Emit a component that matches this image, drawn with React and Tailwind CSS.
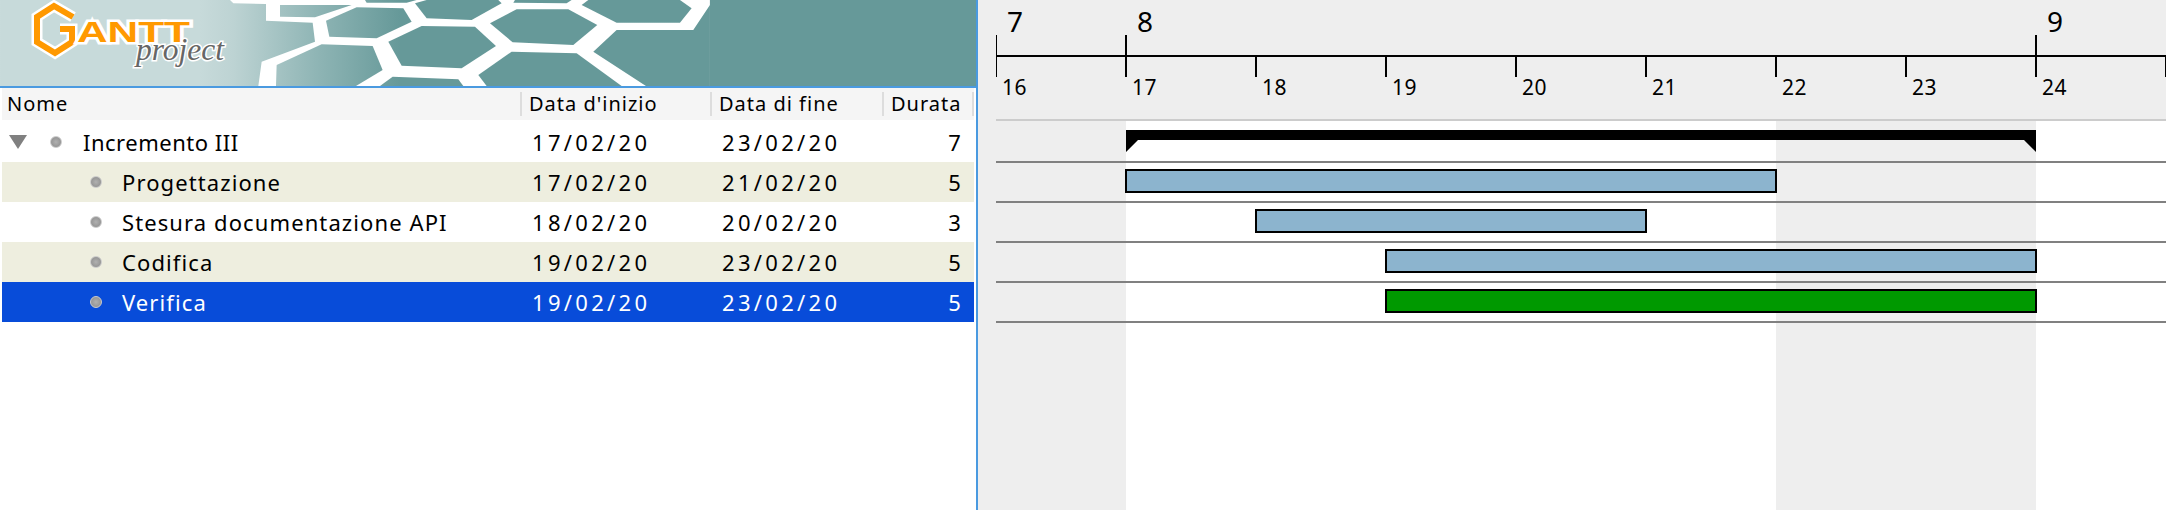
const rows = [
  { name: 'Incremento III', start: '17/02/20', end: '23/02/20', days: 7, summary: true },
  { name: 'Progettazione', start: '17/02/20', end: '21/02/20', days: 5, bar: 'col-start-2 col-span-5 bg-[#8cb4ce]' },
  { name: 'Stesura documentazione API', start: '18/02/20', end: '20/02/20', days: 3, bar: 'col-start-3 col-span-3 bg-[#8cb4ce]' },
  { name: 'Codifica', start: '19/02/20', end: '23/02/20', days: 5, bar: 'col-start-4 col-span-5 bg-[#8cb4ce]' },
  { name: 'Verifica', start: '19/02/20', end: '23/02/20', days: 5, bar: 'col-start-4 col-span-5 bg-[#009900]', selected: true },
]

const days = [16, 17, 18, 19, 20, 21, 22, 23, 24]

// coordinates taken from a 3x crop starting at x=200
const cells = [
  '240,15 455,15 345,52 240,50',
  '495,0 650,0 620,8 500,8',
  '645,10 680,0 895,0 905,10 815,60 680,55',
  '945,0 1115,0 1100,10 940,8',
  '1145,15 1165,0 1440,0 1475,25 1440,68 1250,68',
  '378,62 470,22 610,25 635,65 530,115 388,110',
  '870,70 950,28 1105,28 1192,75 1120,135 938,127',
  '565,125 665,78 825,80 888,138 785,205 605,197',
  '230,195 365,133 518,138 548,210 468,258 228,258',
  '540,258 578,230 775,238 790,258',
  '835,225 935,155 1130,160 1265,258 860,258',
  '1180,155 1250,90 1480,90 1530,15 1530,258 1338,258',
]

function Banner() {
  return (
    <svg width="976" height="86" viewBox="0 0 976 86" className="block" aria-label="GanttProject">
      <defs>
        <linearGradient id="banner" gradientUnits="userSpaceOnUse" x1="0" y1="0" x2="1000" y2="0">
          <stop offset="0" stopColor="#c7dada" />
          <stop offset="0.1" stopColor="#bdd3d3" />
          <stop offset="0.35" stopColor="#8fb5b5" />
          <stop offset="0.6" stopColor="#669999" />
          <stop offset="1" stopColor="#669999" />
        </linearGradient>
      </defs>
      <g transform="translate(200 0) scale(0.3333)">
        <rect x="-600" y="0" width="3000" height="258" fill="url(#banner)" />
        <polygon
          points="90,0 100,10 198,12 198,62 338,68 345,125 185,185 175,258 1530,258 1530,0"
          fill="#fff"
        />
        {cells.map((pts) => (
          <polygon key={pts} points={pts} fill="url(#banner)" />
        ))}
        <rect x="1530" y="0" width="900" height="258" fill="#669999" />
      </g>
      <polyline points="73,17 54,6 37,17 37,42 55,53 72,42 72,29 60,29" fill="none" stroke="#fff" strokeWidth="11" />
      <polyline points="73,17 54,6 37,17 37,42 55,53 72,42 72,29 60,29" fill="none" stroke="#ff9900" strokeWidth="6" />
      <text
        x="77"
        y="42"
        textLength="113"
        lengthAdjust="spacingAndGlyphs"
        fontSize="30"
        fontWeight="700"
        fill="#ff9900"
        stroke="#fff"
        strokeWidth="5"
        paintOrder="stroke"
        className="font-['Liberation_Sans',sans-serif]"
      >
        ANTT
      </text>
      <text
        x="136"
        y="60"
        textLength="88"
        lengthAdjust="spacingAndGlyphs"
        fontSize="31"
        fontStyle="italic"
        fill="#666"
        stroke="#fff"
        strokeWidth="3"
        paintOrder="stroke"
        className="font-['Liberation_Serif',serif]"
      >
        project
      </text>
    </svg>
  )
}

function Bullet({ className }) {
  return (
    <span
      className={`h-3 w-3 shrink-0 rounded-full border border-[#cccccc] bg-[radial-gradient(circle,#b0b0b0,#8a8a8a)] ${className}`}
    />
  )
}

function TaskTable() {
  return (
    <div className="pl-[2px] pr-[2px]">
      <div className="grid h-8 grid-cols-[520px_190px_172px_90px] items-center bg-[#f5f5f5] text-[20px] tracking-[1px] text-black">
        <div className="flex h-6 items-center border-r-2 border-[#dddddd] pl-[5px]">Nome</div>
        <div className="flex h-6 items-center border-r-2 border-[#dddddd] pl-[7px]">Data d'inizio</div>
        <div className="flex h-6 items-center border-r-2 border-[#dddddd] pl-[7px]">Data di fine</div>
        <div className="flex h-6 items-center border-r-2 border-[#dddddd] pl-[7px]">Durata</div>
      </div>
      {rows.map((row, i) => (
        <div
          key={row.name}
          className={`grid grid-cols-[520px_190px_172px_90px] items-center text-[22px] tracking-[1.1px] ${
            row.summary ? 'h-[42px] pt-[2px]' : 'h-10'
          } ${row.selected ? 'bg-[#084cd9] text-white' : i % 2 ? 'bg-[#eeeedf] text-black' : 'bg-white text-black'}`}
        >
          <div className="flex items-center">
            {row.summary ? (
              <>
                <svg width="18" height="14" viewBox="0 0 18 14" className="ml-[7px] shrink-0">
                  <polygon points="0,0 18,0 9,14" fill="#808080" />
                </svg>
                <Bullet className="ml-[23px]" />
                <span className="ml-[21px] tracking-[0.5px]">{row.name}</span>
              </>
            ) : (
              <>
                <Bullet className="ml-[88px]" />
                <span className="ml-[20px]">{row.name}</span>
              </>
            )}
          </div>
          <div className="pl-[10px] tracking-[3.3px]">{row.start}</div>
          <div className="pl-[10px] tracking-[3.3px]">{row.end}</div>
          <div className="pr-[12px] text-right">{row.days}</div>
        </div>
      ))}
    </div>
  )
}

function Tick({ className = '' }) {
  return <span className={`block h-5 w-[2px] shrink-0 bg-black ${className}`} />
}

function TimeScale() {
  return (
    <div className="h-[119px] pl-[18px] text-black">
      <div className="grid h-[55px] grid-cols-[130px_910px_130px]">
        {[7, 8, 9].map((m, i) => (
          <div key={m} className="flex flex-col">
            <div className="h-[35px] pl-[11px] pt-[3px] text-[28px] leading-[36px]">{m}</div>
            <Tick className={i === 0 ? 'w-px' : '-ml-px'} />
          </div>
        ))}
      </div>
      <div className="h-[2px] bg-black" />
      <div className="grid grid-cols-[repeat(9,130px)]">
        {days.map((d, i) => (
          <div key={d}>
            <div className="flex justify-between">
              <Tick className={i === 0 ? 'w-px' : '-ml-px'} />
              {d === 24 && <Tick className="w-px" />}
            </div>
            <div className="-mt-px pl-[6px] text-[21px] leading-[22px] tracking-[0.4px]">{d}</div>
          </div>
        ))}
      </div>
    </div>
  )
}

function ChartRows() {
  return (
    <div className="ml-[18px]">
      {rows.map((row) => (
        <div
          key={row.name}
          className={`grid grid-cols-[repeat(9,130px)] border-b-2 border-[#808080] ${
            row.summary ? 'h-[42px] pt-[9px]' : 'h-10 pt-[6px]'
          }`}
        >
          {row.summary ? (
            <svg width="910" height="22" viewBox="0 0 910 22" className="col-start-2 col-span-7 block">
              <polygon points="0,0 910,0 910,22 898,10 12,10 0,22" fill="#000" />
            </svg>
          ) : (
            <div className={`-mx-px h-6 border-2 border-black ${row.bar}`} />
          )}
        </div>
      ))}
    </div>
  )
}

export default function App() {
  return (
    <div className="flex h-[510px] w-[2166px] overflow-hidden bg-white font-['Noto_Sans',sans-serif]">
      <div className="w-[978px] shrink-0 border-r-2 border-[#4a9ae0]">
        <Banner />
        <div className="h-[2px] bg-[#4a9ae0]" />
        <TaskTable />
      </div>
      <div className="flex flex-1 flex-col bg-[#eeeeee]">
        <TimeScale />
        <div className="ml-[18px] h-[2px] bg-[#cccccc]" />
        <div className="flex-1 bg-[linear-gradient(to_right,#eeeeee_148px,#ffffff_148px,#ffffff_798px,#eeeeee_798px,#eeeeee_1058px,#ffffff_1058px)]">
          <ChartRows />
        </div>
      </div>
    </div>
  )
}
